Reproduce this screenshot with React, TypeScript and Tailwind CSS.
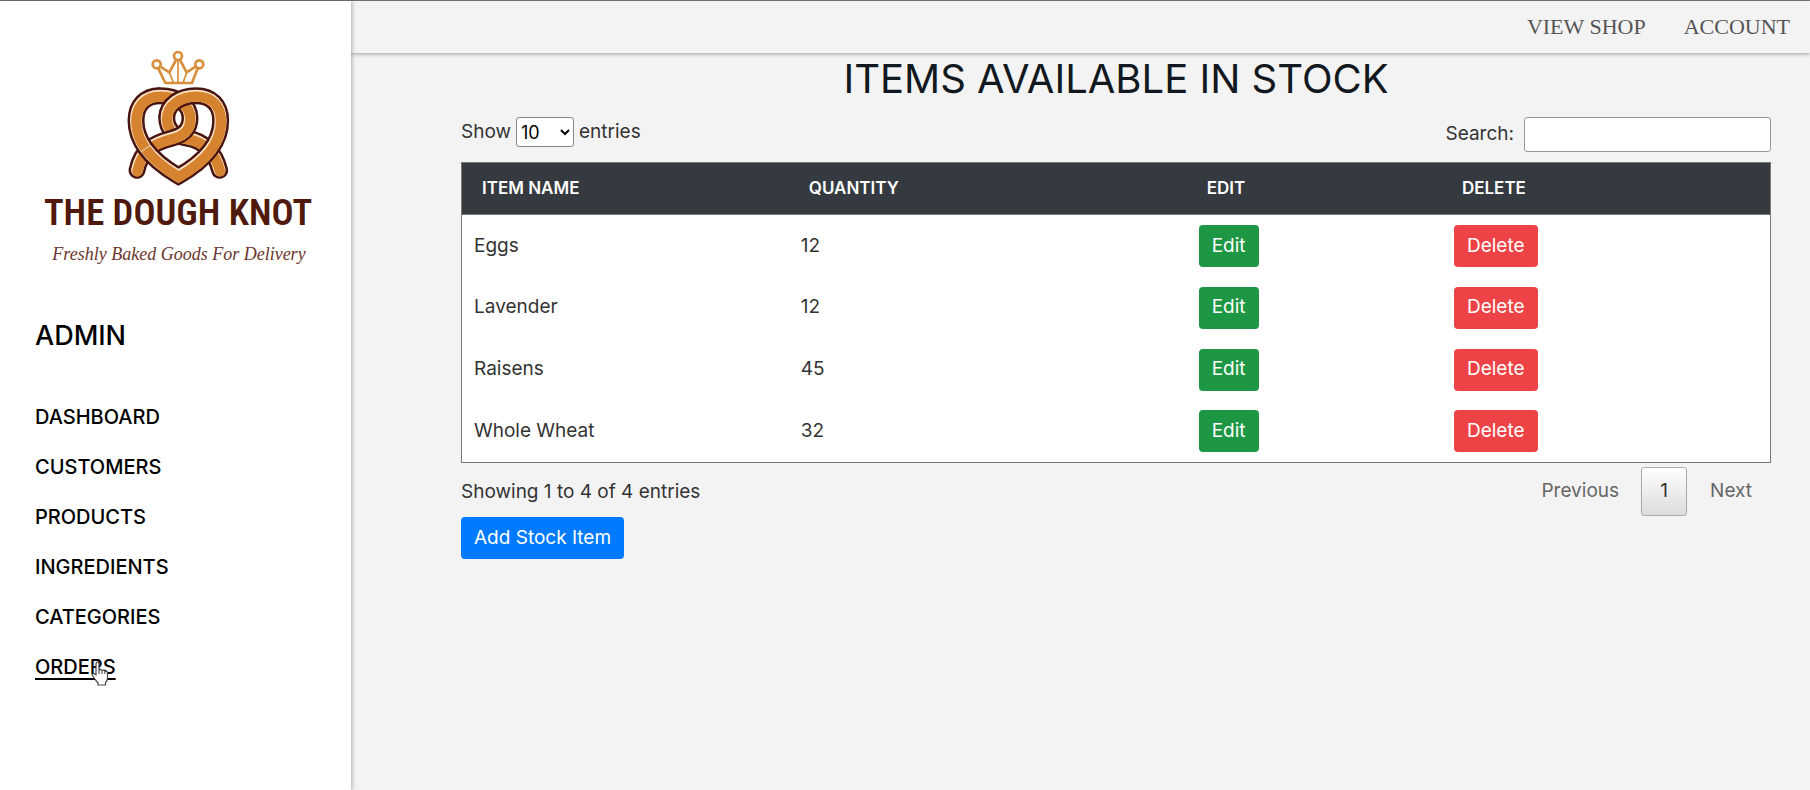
import { useState } from "react";

interface StockItem {
  name: string;
  quantity: number;
}

const navItems = ["DASHBOARD", "CUSTOMERS", "PRODUCTS", "INGREDIENTS", "CATEGORIES", "ORDERS"];

const stock: StockItem[] = [
  { name: "Eggs", quantity: 12 },
  { name: "Lavender", quantity: 12 },
  { name: "Raisens", quantity: 45 },
  { name: "Whole Wheat", quantity: 32 },
];

// one piece of dough: dark outline, cream highlight, baked fill
function Dough({ d, cap = "butt" }: { d: string; cap?: "butt" | "round" }) {
  return (
    <g fill="none" strokeLinecap={cap} strokeLinejoin="miter">
      <path d={d} stroke="#4a1510" strokeWidth="51" />
      <path d={d} stroke="#fbe3c4" strokeWidth="36" />
      <path d={d} stroke="#d5832f" strokeWidth="31" transform="translate(1 3)" />
    </g>
  );
}

function Logo() {
  return (
    <svg viewBox="0 0 900 750" className="block w-[300px] h-[250px]" role="img" aria-label="The Dough Knot">
      <g fill="none" stroke="#d98e3a" strokeWidth="8" strokeLinejoin="round">
        <circle cx="380" cy="103" r="12" />
        <circle cx="444" cy="78" r="12" />
        <circle cx="508" cy="103" r="12" />
        <path d="M385 115 L406 159 H486 L503 115" />
        <path d="M391 110 L418 127 L438 90 M450 90 L470 127 L497 110" />
        <path d="M418 127 L430 157 M444 90 V157 M470 127 L460 157" strokeWidth="5" />
      </g>
      <Dough cap="round" d="M410 262 C410 300 435 320 470 324 C520 332 555 365 569 421" />
      <Dough cap="round" d="M390 197 C445 197 480 225 480 264 C480 302 456 316 424 325 C375 338 335 355 321 421" />
      <Dough d="M390 197 C345 197 318 226 318 272 C318 305 330 332 348 357" />
      <Dough d="M346 354 C370 388 405 414 445 438 C515 398 572 345 572 272 C572 226 545 197 498 197 C450 197 410 224 410 264" />
      <text
        x="444"
        y="585"
        textAnchor="middle"
        fill="#4f1a0c"
        fontSize="110"
        fontWeight="600"
        fontFamily="'Liberation Sans Narrow', 'Roboto Condensed', 'Liberation Sans', sans-serif"
      >
        THE DOUGH KNOT
      </text>
      <text
        x="447"
        y="690"
        textAnchor="middle"
        fill="#6b352c"
        fontSize="54"
        fontStyle="italic"
        fontFamily="'Liberation Serif', serif"
      >
        Freshly Baked Goods For Delivery
      </text>
    </svg>
  );
}

function HandCursor() {
  return (
    <svg viewBox="0 0 18 25" className="absolute left-[56px] top-[19px] w-[18px] h-[25px]" aria-hidden="true">
      <path
        d="M5 14 V3 Q5 1 6.500 1 Q8 1 8 3 V9 Q9.500 7.500 11 9.500 Q12.500 8.300 13.800 10.200 Q16.500 9.500 16.500 12.500 V17 Q16.500 20 14.500 21.500 V24 H7 V22 Q4 18.500 1.500 14.500 Q.8 12.500 2.500 12.500 Q4 12.700 5 14 Z"
        fill="#fff"
        stroke="#444"
        strokeWidth="1.200"
        strokeLinejoin="round"
      />
      <path d="M8 9 V13 M11 10 V13 M13.800 10.500 V13" stroke="#444" strokeWidth="1" fill="none" />
    </svg>
  );
}

function Sidebar() {
  return (
    <aside className="relative z-10 w-[351px] shrink-0 bg-white px-[35px] shadow-[1px_0_4px_rgba(0,0,0,0.3)]">
      <div className="-mx-[5px] pt-[29px]">
        <Logo />
      </div>
      <h2 className="mt-9 text-[27px] leading-10 font-medium text-black">ADMIN</h2>
      <nav className="mt-9 flex flex-col items-start">
        {navItems.map((item) => (
          <a
            key={item}
            href="#"
            className={
              item === "ORDERS"
                ? "relative text-[20px] leading-[50px] font-medium text-black underline underline-offset-4"
                : "text-[20px] leading-[50px] font-medium text-black"
            }
          >
            {item}
            {item === "ORDERS" && <HandCursor />}
          </a>
        ))}
      </nav>
    </aside>
  );
}

function StockTable({ items }: { items: StockItem[] }) {
  return (
    <table className="w-full table-fixed border-collapse border border-[#777] bg-white text-left">
      <colgroup>
        <col className="w-[25%]" />
        <col className="w-[30.4%]" />
        <col className="w-[19.5%]" />
        <col />
      </colgroup>
      <thead>
        <tr className="h-[52px] border-b border-[#777] bg-[#343a40] text-[17px] text-white">
          <th className="px-5 font-semibold">ITEM NAME</th>
          <th className="px-5 font-semibold">QUANTITY</th>
          <th className="px-5 font-semibold">EDIT</th>
          <th className="px-5 font-semibold">DELETE</th>
        </tr>
      </thead>
      <tbody>
        {items.map((item) => (
          <tr key={item.name} className="h-[62px]">
            <td className="px-3">{item.name}</td>
            <td className="px-3">{item.quantity}</td>
            <td className="px-3">
              <button className="block h-[42px] rounded bg-[#1e9744] px-[13px] text-white">Edit</button>
            </td>
            <td className="px-3">
              <button className="block h-[42px] rounded bg-[#ee4346] px-[13px] text-white">Delete</button>
            </td>
          </tr>
        ))}
      </tbody>
    </table>
  );
}

export default function App() {
  const [search, setSearch] = useState("");
  const items = stock.filter((item) => item.name.toLowerCase().includes(search.toLowerCase()));

  return (
    <div className="flex min-h-screen border-t border-[#777] bg-[#f3f3f3] font-['Inter',sans-serif] text-[19px] text-[#333]">
      <Sidebar />
      <div className="min-w-0 flex-1">
        <header className="flex h-[52px] items-center justify-end gap-[38px] pr-5 pb-[2px] font-['Liberation_Serif',serif] text-[22px] text-[#555] shadow-[0_1px_4px_rgba(0,0,0,0.35)]">
          <a href="#">VIEW SHOP</a>
          <a href="#">ACCOUNT</a>
        </header>
        <main className="pr-[39px] pl-[110px]">
          <h1 className="pt-[2px] text-center text-[40px] leading-[48px] text-[#111820]">ITEMS AVAILABLE IN STOCK</h1>
          <div className="mt-[14px] mb-[10px] flex items-start justify-between">
            <label className="flex items-center gap-[5px]">
              Show
              <select className="h-[30px] w-[58px] rounded-[3px] border border-[#888] bg-white text-[18px] text-black">
                <option>10</option>
                <option>25</option>
                <option>50</option>
                <option>100</option>
              </select>
              entries
            </label>
            <label className="flex items-center gap-[10px]">
              Search:
              <input
                type="search"
                value={search}
                onChange={(e) => setSearch(e.target.value)}
                className="h-[35px] w-[247px] rounded-[3px] border border-[#999] bg-white px-2"
              />
            </label>
          </div>
          <StockTable items={items} />
          <div className="flex items-start justify-between pt-1">
            <div>
              <p className="leading-[50px]">Showing 1 to 4 of 4 entries</p>
              <button className="block h-[42px] rounded bg-[#007bff] px-[13px] text-white">Add Stock Item</button>
            </div>
            <div className="flex gap-1 text-[#666]">
              <button className="h-[49px] px-[18px]">Previous</button>
              <button className="h-[49px] w-[46px] rounded-[3px] border border-[#aaa] bg-linear-to-b from-white to-[#dcdcdc] text-[#333]">
                1
              </button>
              <button className="h-[49px] px-[19px]">Next</button>
            </div>
          </div>
        </main>
      </div>
    </div>
  );
}
